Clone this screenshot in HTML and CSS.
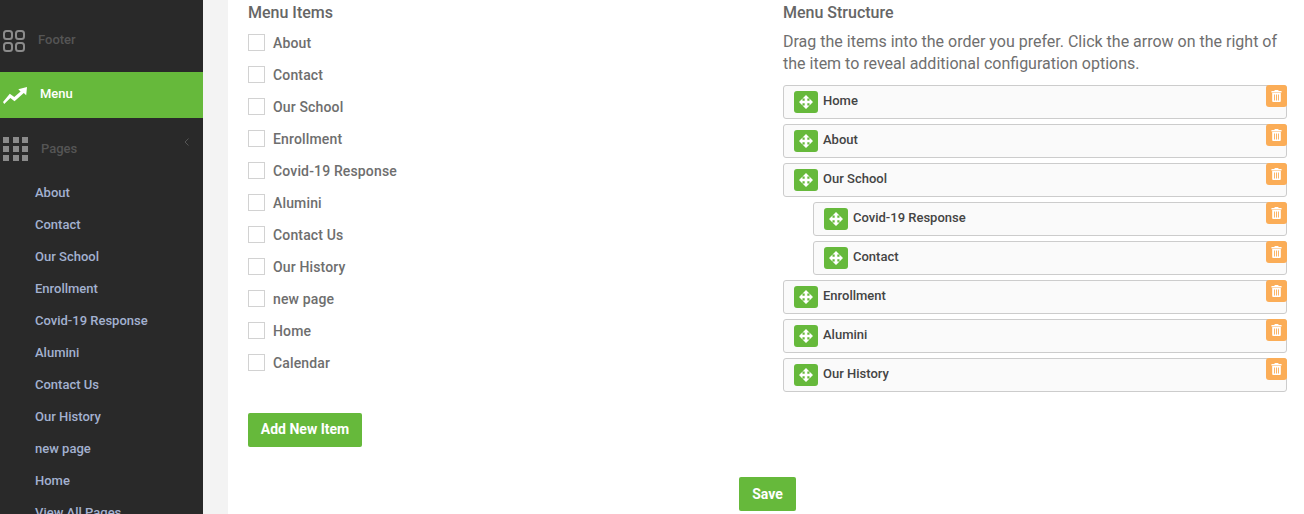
FILE: index.html
```html
<!DOCTYPE html>
<html lang="en">

<head>
    <meta charset="UTF-8">
    <title>Menu</title>
    <link rel="stylesheet" href="styles.css">
</head>

<body>
    <svg class="sprites" width="0" height="0">
        <symbol id="move" viewBox="0 0 16 16">
            <path d="M8 0 12 4H9.500V6.500H12V4L16 8 12 12V9.500H9.500V12H12L8 16 4 12H6.500V9.500H4V12L0 8 4 4V6.500H6.500V4H4Z" />
        </symbol>
        <symbol id="trash" viewBox="0 0 12 13">
            <path d="M4.200 0H7.800L8.400 1.100H11.500V2.600H.5V1.100H3.600ZM1.300 3.300H10.700V12A1 1 0 0 1 9.700 13H2.300A1 1 0 0 1 1.300 12ZM3.400 4.800V11.500H4.400V4.800ZM5.500 4.800V11.500H6.500V4.800ZM7.600 4.800V11.500H8.600V4.800Z" />
        </symbol>
    </svg>

    <div class="layout">
        <aside class="sidebar">
            <div class="nav-item nav-footer">
                <svg class="nav-icon" width="22" height="22" viewBox="0 0 22 22" fill="none" stroke="#8b8b8b" stroke-width="2">
                    <rect x="1" y="1" width="8" height="8" rx="2.500" />
                    <rect x="13" y="1" width="8" height="8" rx="2.500" />
                    <rect x="1" y="13" width="8" height="8" rx="2.500" />
                    <rect x="13" y="13" width="8" height="8" rx="2.500" />
                </svg>
                <span class="nav-label">Footer</span>
            </div>
            <div class="nav-item nav-active">
                <svg class="nav-icon" width="24" height="17" viewBox="0 0 24 17" fill="#fff">
                    <path d="M0 15 6.800 6.800 11.300 10 17.600 4.600 15.300 2.200 24 0 23.200 8.300 20.800 5.900 11.500 14.200 7.400 11 1.200 17Z" />
                </svg>
                <span class="nav-label">Menu</span>
            </div>
            <div class="nav-item nav-pages">
                <div class="grid-icon">
                    <i></i><i></i><i></i><i></i><i></i><i></i><i></i><i></i><i></i>
                </div>
                <span class="nav-label">Pages</span>
                <svg class="nav-caret" width="5" height="8" viewBox="0 0 5 8" fill="none" stroke="#555" stroke-width="1">
                    <path d="M4.500 .5 1 4 4.500 7.500" />
                </svg>
            </div>
            <ul class="subnav">
                <li>About</li>
                <li>Contact</li>
                <li>Our School</li>
                <li>Enrollment</li>
                <li>Covid-19 Response</li>
                <li>Alumini</li>
                <li>Contact Us</li>
                <li>Our History</li>
                <li>new page</li>
                <li>Home</li>
                <li>View All Pages</li>
            </ul>
        </aside>

        <div class="gutter"></div>

        <main class="content">
            <div class="columns">
                <section class="col-items">
                    <h3>Menu Items</h3>
                    <ul class="check-list">
                        <li><span class="checkbox"></span>About</li>
                        <li><span class="checkbox"></span>Contact</li>
                        <li><span class="checkbox"></span>Our School</li>
                        <li><span class="checkbox"></span>Enrollment</li>
                        <li><span class="checkbox"></span>Covid-19 Response</li>
                        <li><span class="checkbox"></span>Alumini</li>
                        <li><span class="checkbox"></span>Contact Us</li>
                        <li><span class="checkbox"></span>Our History</li>
                        <li><span class="checkbox"></span>new page</li>
                        <li><span class="checkbox"></span>Home</li>
                        <li><span class="checkbox"></span>Calendar</li>
                    </ul>
                    <button class="btn btn-add">Add New Item</button>
                </section>

                <section class="col-structure">
                    <h3>Menu Structure</h3>
                    <p class="hint">Drag the items into the order you prefer. Click the arrow on the right of the item to reveal additional configuration options.</p>
                    <ul class="tree">
                        <li class="tree-row"><span class="handle"><svg width="14" height="14"><use href="#move" /></svg></span>Home<span class="remove"><svg width="11" height="12"><use href="#trash" /></svg></span></li>
                        <li class="tree-row"><span class="handle"><svg width="14" height="14"><use href="#move" /></svg></span>About<span class="remove"><svg width="11" height="12"><use href="#trash" /></svg></span></li>
                        <li class="tree-row"><span class="handle"><svg width="14" height="14"><use href="#move" /></svg></span>Our School<span class="remove"><svg width="11" height="12"><use href="#trash" /></svg></span></li>
                        <li class="tree-row nested"><span class="handle"><svg width="14" height="14"><use href="#move" /></svg></span>Covid-19 Response<span class="remove"><svg width="11" height="12"><use href="#trash" /></svg></span></li>
                        <li class="tree-row nested"><span class="handle"><svg width="14" height="14"><use href="#move" /></svg></span>Contact<span class="remove"><svg width="11" height="12"><use href="#trash" /></svg></span></li>
                        <li class="tree-row"><span class="handle"><svg width="14" height="14"><use href="#move" /></svg></span>Enrollment<span class="remove"><svg width="11" height="12"><use href="#trash" /></svg></span></li>
                        <li class="tree-row"><span class="handle"><svg width="14" height="14"><use href="#move" /></svg></span>Alumini<span class="remove"><svg width="11" height="12"><use href="#trash" /></svg></span></li>
                        <li class="tree-row"><span class="handle"><svg width="14" height="14"><use href="#move" /></svg></span>Our History<span class="remove"><svg width="11" height="12"><use href="#trash" /></svg></span></li>
                    </ul>
                </section>
            </div>
            <div class="actions">
                <button class="btn btn-save">Save</button>
            </div>
        </main>
    </div>
</body>

</html>
```

FILE: styles.css
```css
html,
body {
    margin: 0;
    height: 514px;
    overflow: hidden;
    background: #fff;
    font-family: Roboto, "Liberation Sans", sans-serif;
}

ul {
    list-style: none;
    margin: 0;
    padding: 0;
}

.sprites {
    display: block;
    height: 0;
}

.layout {
    display: flex;
    height: 514px;
    overflow: hidden;
}

/* sidebar */
.sidebar {
    width: 203px;
    flex: none;
    background: #292929;
    overflow: hidden;
}

.gutter {
    width: 25px;
    flex: none;
    background: #f3f3f3;
}

.nav-item {
    display: flex;
    align-items: center;
    padding-left: 3px;
    font-size: 13px;
    font-weight: 500;
    color: #555;
}

.nav-footer {
    height: 66px;
    padding-top: 6px;
}

.nav-footer .nav-icon {
    margin-top: 3px;
}

.nav-footer .nav-label {
    margin-left: 13px;
}

.nav-active {
    height: 46px;
    background: #66b93b;
    color: #fff;
}

.nav-active .nav-icon {
    margin-top: 1px;
}

.nav-active .nav-label {
    margin-left: 13px;
    margin-top: -3px;
}

.nav-pages {
    height: 57px;
    padding-top: 2px;
}

.nav-pages .nav-label {
    margin-left: 13px;
    font-size: 13px;
}

.grid-icon {
    display: grid;
    grid-template-columns: repeat(3, 6px);
    grid-auto-rows: 6px;
    gap: 3px 3.500px;
}

.grid-icon i {
    background: #8b8b8b;
}

.nav-caret {
    margin-left: auto;
    margin-right: 14px;
    margin-top: -14px;
}

.subnav {
    padding-left: 35px;
}

.subnav li {
    height: 32px;
    line-height: 32px;
    font-size: 13px;
    font-weight: 500;
    color: #a3b1d0;
}

/* main area */
.content {
    flex: 1;
    padding: 3px 17px 0 20px;
    min-width: 0;
}

.columns {
    display: flex;
}

.col-items {
    width: 535px;
    flex: none;
}

.col-structure {
    flex: 1;
    min-width: 0;
}

h3 {
    margin: 0;
    font-size: 16px;
    line-height: 19px;
    font-weight: 500;
    color: #666;
}

.check-list {
    margin-top: 5px;
}

.check-list li {
    display: flex;
    align-items: center;
    height: 32px;
    font-size: 14px;
    font-weight: 500;
    letter-spacing: .15px;
    color: #6e6e6e;
}

.checkbox {
    width: 15px;
    height: 15px;
    margin: -2px 8px 0 0;
    border: 1px solid #d2d2d2;
    background: #fff;
}

.btn {
    display: block;
    height: 34px;
    border: 0;
    border-radius: 2px;
    background: #66b93b;
    color: #fff;
    font-family: inherit;
    font-size: 14px;
    font-weight: 700;
    cursor: pointer;
}

.btn-add {
    width: 114px;
    margin-top: 34px;
    padding-bottom: 3px;
}

.btn-save {
    width: 57px;
}

.actions {
    display: flex;
    justify-content: center;
    margin-top: 30px;
}

.hint {
    margin: 9px 0 0;
    font-size: 16px;
    line-height: 22px;
    color: #6f6f6f;
}

.tree {
    margin-top: 10px;
}

.tree-row {
    position: relative;
    display: flex;
    align-items: flex-start;
    box-sizing: border-box;
    height: 34px;
    margin-bottom: 5px;
    padding: 5px 0 0 10px;
    border: 1px solid #ccc;
    border-radius: 3px;
    background: #fafafa;
    font-size: 13px;
    font-weight: 500;
    line-height: 20px;
    color: #444;
}

.tree-row.nested {
    margin-left: 30px;
}

.handle {
    display: flex;
    align-items: center;
    justify-content: center;
    width: 24px;
    height: 22px;
    margin-right: 5px;
    border-radius: 3px;
    background: #66b93b;
    fill: #fff;
}

.remove {
    position: absolute;
    top: -1px;
    right: -1px;
    display: flex;
    align-items: center;
    justify-content: center;
    width: 21px;
    height: 22px;
    border-radius: 3px;
    background: #fbad57;
    fill: #fff;
}
```
